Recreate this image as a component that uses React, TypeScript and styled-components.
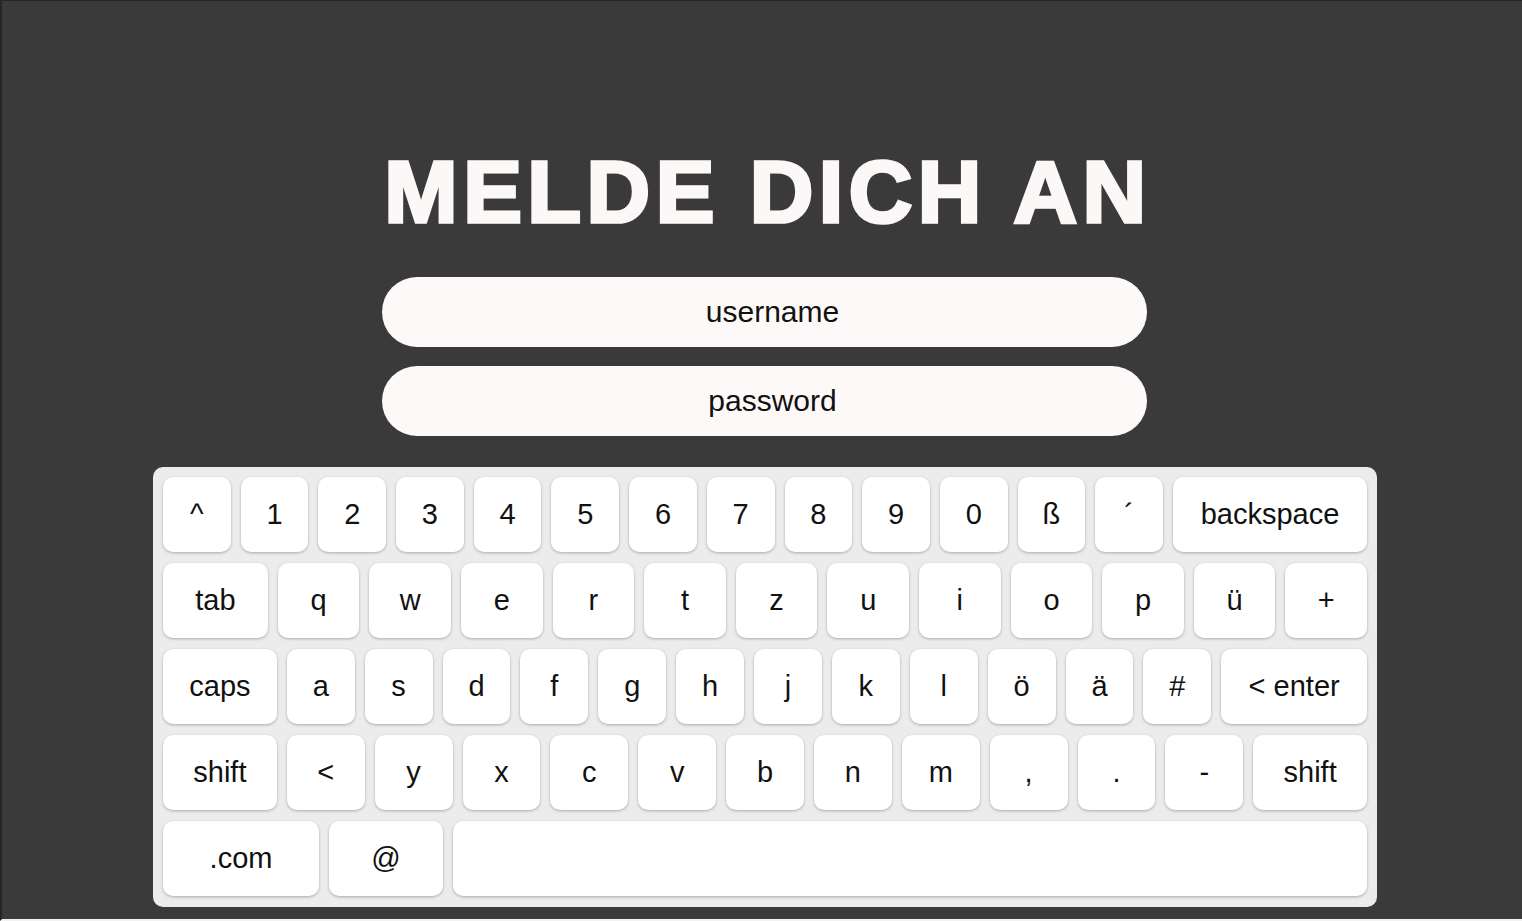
import React from 'react';
import styled, {createGlobalStyle} from 'styled-components';

const GlobalStyle = createGlobalStyle`
  html, body {
    margin: 0;
    padding: 0;
    background: #3a3a3a;
  }
  * {
    box-sizing: border-box;
  }
`

const Page = styled.div`
  height: 921px;
  overflow: hidden;
  display: flex;
  flex-direction: column;
  align-items: center;
  padding-top: 147px;
  padding-left: 4px;
  background: #3a3a3a;
  border-left: 2px solid #262626;
  border-top: 1px solid #262626;
  border-bottom: 2px solid #f2f2f2;
  font-family: "Liberation Sans", Arial, sans-serif;
`
const Title = styled.h1`
  margin: 0 0 41px;
  padding-left: 8px;
  font-size: 88px;
  line-height: 88px;
  font-weight: 700;
  letter-spacing: 5.5px;
  color: #fdf8f8;
  -webkit-text-stroke: 3.5px #fdf8f8;
`
const Form = styled.div`
  display: flex;
  flex-direction: column;
  gap: 19px;
  width: 765px;
  margin-bottom: 31px;
`
const Field = styled.input`
  height: 70px;
  width: 100%;
  border: none;
  outline: none;
  border-radius: 35px;
  background: #fdf9f8;
  padding: 0 0 0 17px;
  text-align: center;
  font-family: "Liberation Sans", Arial, sans-serif;
  font-size: 30px;
  color: #111;
  &::placeholder {
    color: #111;
  }
`
const Keyboard = styled.div`
  width: 1224px;
  margin-left: 2px;
  padding: 10px 10px 11px;
  background: #ececec;
  border-radius: 10px;
  display: flex;
  flex-direction: column;
  gap: 11px;
`
const Row = styled.div`
  display: flex;
  gap: 10px;
`
const Key = styled.button<{$grow: number}>`
  flex: ${p => p.$grow} 1 0;
  min-width: 0;
  height: 75px;
  border: none;
  border-radius: 10px;
  background: #fff;
  box-shadow: 0 1px 3px rgba(0, 0, 0, 0.28);
  display: flex;
  align-items: center;
  justify-content: center;
  padding: 0;
  font-family: "Liberation Sans", Arial, sans-serif;
  font-size: 29px;
  color: #111;
  cursor: pointer;
`

type K = [string, number]

const std = (chars: string, w: number): K[] => chars.split(' ').map(c => [c, w])

const rows: K[][] = [
  [...std('^ 1 2 3 4 5 6 7 8 9 0 ß ´', 68), ['backspace', 195]],
  [['tab', 104], ...std('q w e r t z u i o p ü +', 81)],
  [['caps', 114], ...std('a s d f g h j k l ö ä #', 68), ['< enter', 146]],
  [['shift', 114], ...std('< y x c v b n m , . -', 78), ['shift', 114]],
  [['.com', 156], ['@', 114], ['', 914]],
]

const App: React.FC = () => {
  return (
    <Page>
      <GlobalStyle/>
      <Title>MELDE DICH AN</Title>
      <Form>
        <Field placeholder="username"/>
        <Field type="password" placeholder="password"/>
      </Form>
      <Keyboard>
        {rows.map((row, i) => (
          <Row key={i}>
            {row.map(([label, w], j) => (
              <Key key={j} $grow={w}>{label}</Key>
            ))}
          </Row>
        ))}
      </Keyboard>
    </Page>
  )
}

export default App;
